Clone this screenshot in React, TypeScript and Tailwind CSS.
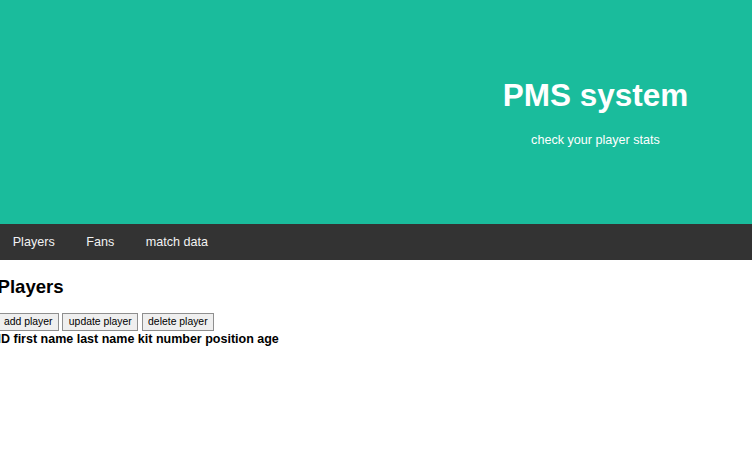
const navLinks = ["Players", "Fans", "match data"];

const columns = ["ID", "first name", "last name", "kit number", "position", "age"];

const actions = ["add player", "update player", "delete player"];

export default function App() {
  return (
    <div className="min-h-[458px] bg-white font-['Liberation_Sans',Arial,sans-serif] text-black">
      <header className="h-[224px] bg-[#1abc9c] pl-[439px] pt-[77px] text-center text-white">
        <h1 className="text-[31.5px] font-bold leading-[36px]">PMS system</h1>
        <p className="mt-[20px] text-[12.6px] leading-[15px]">check your player stats</p>
      </header>

      <nav className="flex h-[36px] gap-[31.5px] bg-[#333333] pl-[12.7px]">
        {navLinks.map((link) => (
          <a key={link} href="#" className="text-[12.6px] leading-[37px] text-[#f2f2f2]">
            {link}
          </a>
        ))}
      </nav>

      <main className="-ml-[2.5px]">
        <h2 className="mt-[16.4px] text-[18.6px] font-bold leading-[21px]">Players</h2>
        <div className="mt-[15.4px] flex gap-[3.3px]">
          {actions.map((label) => (
            <button
              key={label}
              className="h-[18px] border border-[#8f8f8f] bg-[#efefef] px-[5.5px] text-[10.4px] leading-[16px] text-black"
            >
              {label}
            </button>
          ))}
        </div>
        <table className="mt-[1px] border-collapse">
          <thead>
            <tr className="text-[12.5px] font-bold leading-[15px]">
              <th className="p-0 text-left">{columns.join(" ")}</th>
            </tr>
          </thead>
        </table>
      </main>
    </div>
  );
}
